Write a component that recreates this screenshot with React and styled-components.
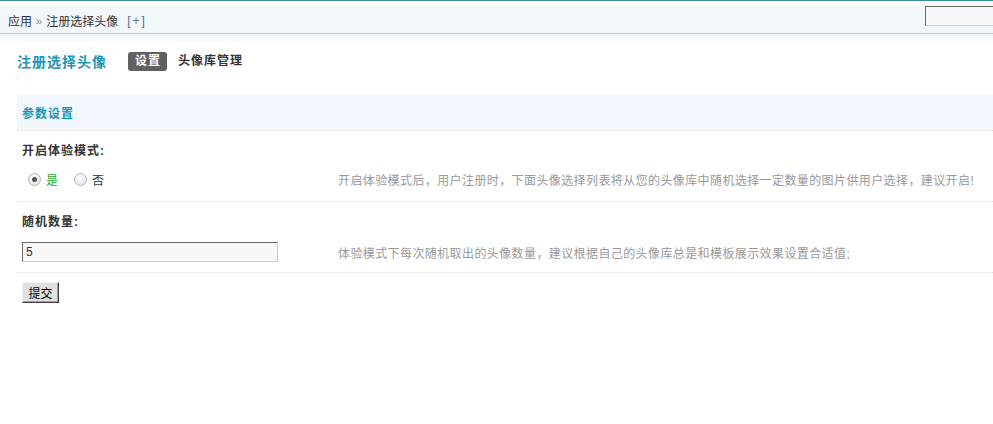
import React from 'react';
import styled, { createGlobalStyle } from 'styled-components';

const GlobalStyle = createGlobalStyle`
  html, body {
    margin: 0;
    padding: 0;
    background: #fff;
    font-family: "Liberation Sans", "Noto Sans CJK SC", sans-serif;
    font-size: 12px;
    color: #333;
  }
`;

const Page = styled.div`
  width: 993px;
  height: 424px;
  overflow: hidden;
  border-top: 1px solid #3b8e9c;
`;

const TopBar = styled.header`
  margin-top: 5px;
  height: 27px;
  background: #f2f7fc;
  border-bottom: 1px solid #b7c9cc;
  display: flex;
  align-items: flex-start;
  justify-content: space-between;
  padding-left: 8px;
  position: relative;
  &::after {
    content: '';
    position: absolute;
    left: 0;
    right: 0;
    top: 28px;
    height: 9px;
    background: linear-gradient(#e9f1f8, #fff);
  }
`;

const Crumbs = styled.div`
  display: flex;
  align-items: center;
  gap: 4px;
  height: 27px;
  color: #333;
  padding-top: 2px;
  box-sizing: border-box;
`;

const Sep = styled.span`
  color: #888;
  font-size: 11px;
`;

const AddLink = styled.span`
  color: #4a6f95;
  margin-left: 5px;
  letter-spacing: 2px;
`;

const SearchBox = styled.input`
  flex-shrink: 0;
  box-sizing: border-box;
  width: 78px;
  height: 20px;
  margin: 0 -10px 0 0;
  padding: 0;
  border: 1px solid;
  border-color: #666 #ccc #ccc #666;
  background: #f7f7f7;
`;

const Content = styled.main`
  padding: 0 0 0 17px;
`;

const NavRow = styled.div`
  display: flex;
  align-items: center;
  height: 38px;
  margin-top: 8px;
`;

const Title = styled.h1`
  margin: 0 21px 0 0;
  font-size: 14px;
  font-weight: bold;
  letter-spacing: 1px;
  color: #1f94b6;
`;

const Tab = styled.span`
  font-weight: bold;
  font-size: 12px;
  letter-spacing: 1px;
  margin-right: 11px;
  height: 19px;
  line-height: 19px;
  padding: ${p => (p.$active ? '0 6px 0 7px' : '0')};
  border-radius: 3px;
  color: ${p => (p.$active ? '#fff' : '#333')};
  background: ${p => (p.$active ? '#606060' : 'transparent')};
`;

const Table = styled.section`
  margin-top: 15px;
`;

const SectionHead = styled.div`
  height: 35px;
  display: flex;
  align-items: center;
  padding-left: 5px;
  background: #f1f7fc;
  border-bottom: 1px dotted #ddd;
  color: #1a93b4;
  font-weight: bold;
  letter-spacing: 1px;
`;

const Label = styled.div`
  font-weight: bold;
  letter-spacing: 1px;
  padding: 10px 0 0 5px;
  height: 20px;
  line-height: 20px;
  color: #333;
`;

const FieldRow = styled.div`
  display: grid;
  grid-template-columns: 316px 1fr;
  align-items: end;
  border-bottom: 1px dotted #ddd;
  padding: 0 0 ${p => p.$pb}px 5px;
  height: 41px;
  box-sizing: border-box;
`;

const Tip = styled.div`
  color: #999;
  letter-spacing: 0.4px;
  line-height: 16px;
`;

const Radios = styled.div`
  display: flex;
  align-items: center;
  padding-left: 6px;
  height: 20px;
`;

const RadioItem = styled.label`
  display: flex;
  align-items: center;
  gap: 3px;
  margin-right: 16px;
  color: ${p => (p.$checked ? '#1ea61e' : '#333')};
`;

const RadioDot = styled.span`
  width: 11px;
  height: 11px;
  border-radius: 50%;
  border: 1px solid #b5b5b5;
  background: radial-gradient(circle at 40% 35%, #fff, #dcdcdc);
  display: inline-flex;
  align-items: center;
  justify-content: center;
  margin-right: 2px;
  &::after {
    content: '';
    width: 5px;
    height: 5px;
    border-radius: 50%;
    background: ${p => (p.$checked ? '#555' : 'transparent')};
  }
`;

const TextInput = styled.input`
  box-sizing: border-box;
  width: 256px;
  height: 20px;
  margin: 0;
  padding: 1px 3px;
  border: 1px solid;
  border-color: #666 #ccc #ccc #666;
  background: #f7f7f7;
  font-family: "Liberation Sans", sans-serif;
  font-size: 12px;
  color: #333;
`;

const Submit = styled.button`
  display: block;
  box-sizing: border-box;
  margin: 9px 0 0 5px;
  width: 37px;
  height: 21px;
  padding: 0;
  font-family: "Noto Sans CJK SC", sans-serif;
  font-size: 12px;
  color: #000;
  background: #e0e0e0;
  border: 1px solid;
  border-color: #f5f5f5 #404040 #404040 #f5f5f5;
  box-shadow: inset -1px -1px 0 #a0a0a0;
`;

export default function App() {
  return (
    <Page>
      <GlobalStyle />
      <TopBar>
        <Crumbs>
          <span>应用</span>
          <Sep>»</Sep>
          <span>注册选择头像</span>
          <AddLink>[+]</AddLink>
        </Crumbs>
        <SearchBox />
      </TopBar>
      <Content>
        <NavRow>
          <Title>注册选择头像</Title>
          <Tab $active>设置</Tab>
          <Tab>头像库管理</Tab>
        </NavRow>
        <Table>
          <SectionHead>参数设置</SectionHead>
          <Label>开启体验模式:</Label>
          <FieldRow $pb={12}>
            <Radios>
              <RadioItem $checked>
                <RadioDot $checked />是
              </RadioItem>
              <RadioItem>
                <RadioDot />否
              </RadioItem>
            </Radios>
            <Tip>开启体验模式后，用户注册时，下面头像选择列表将从您的头像库中随机选择一定数量的图片供用户选择，建议开启!</Tip>
          </FieldRow>
          <Label>随机数量:</Label>
          <FieldRow $pb={10}>
            <TextInput defaultValue="5" />
            <Tip>体验模式下每次随机取出的头像数量，建议根据自己的头像库总是和模板展示效果设置合适值;</Tip>
          </FieldRow>
          <Submit>提交</Submit>
        </Table>
      </Content>
    </Page>
  );
}
